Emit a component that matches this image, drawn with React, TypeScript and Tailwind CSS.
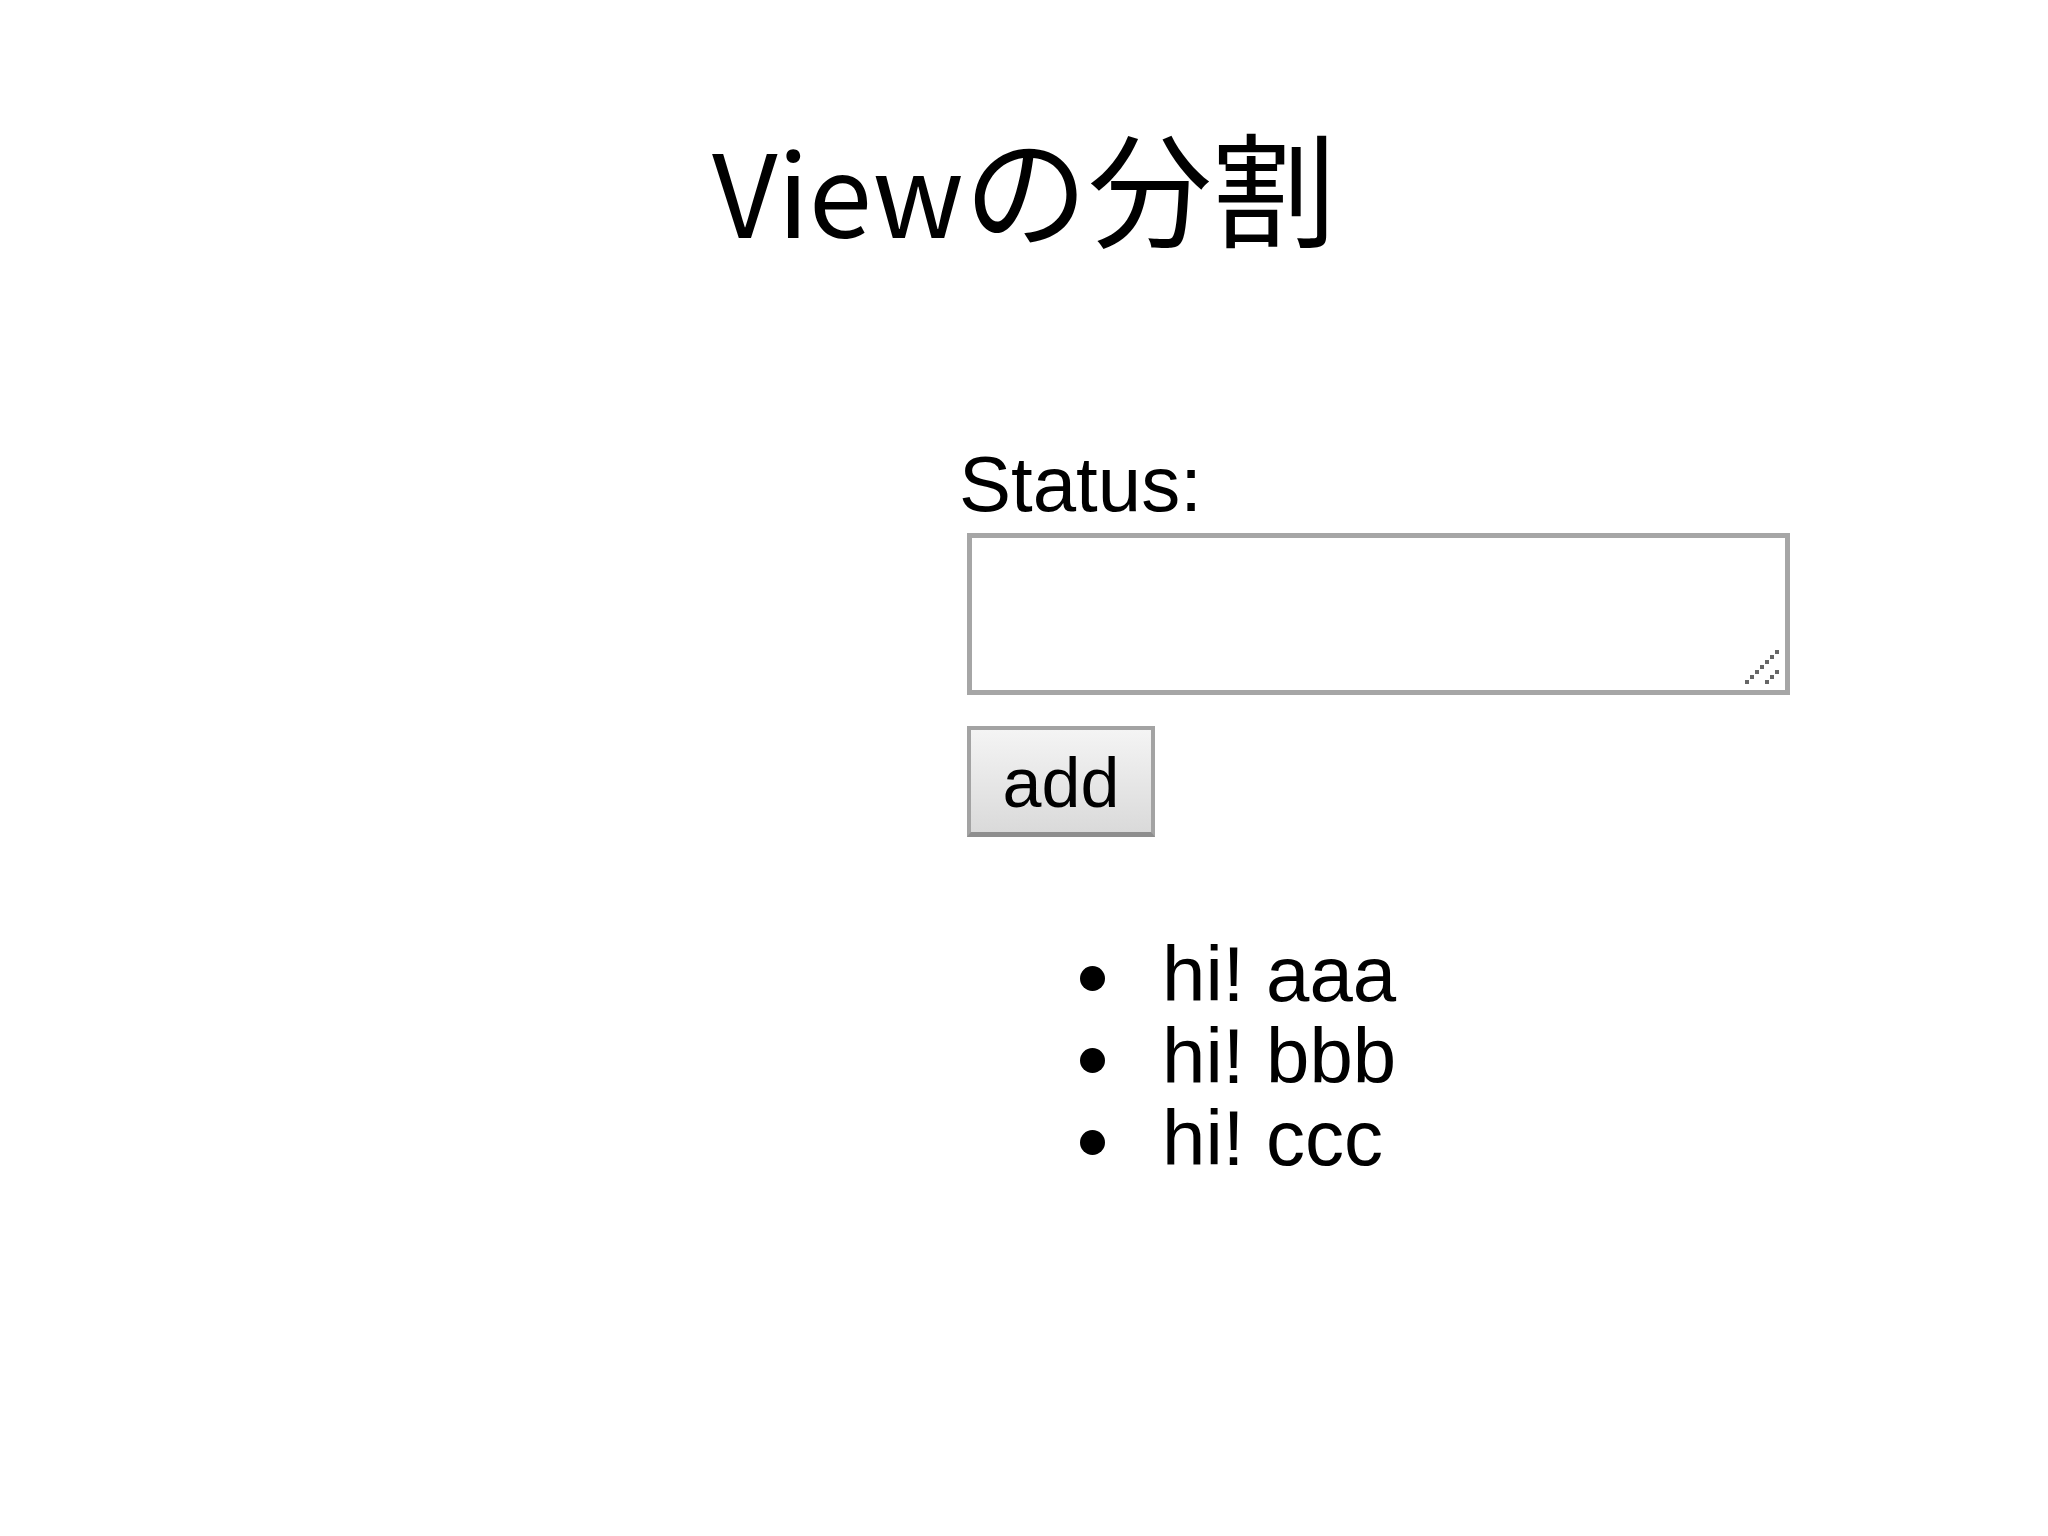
import React from "react";

const items = ["hi! aaa", "hi! bbb", "hi! ccc"];

function Grip() {
  const long = [0, 1, 2, 3, 4, 5, 6];
  const short = [0, 1, 2];
  return (
    <svg
      className="absolute right-[4px] bottom-[5px]"
      width="37"
      height="36"
      viewBox="0 0 37 36"
    >
      {long.map((k) => (
        <rect key={"l" + k} x={1 + 5 * k} y={31 - 5 * k} width="4" height="4" fill="#666666" />
      ))}
      {short.map((k) => (
        <rect key={"s" + k} x={21 + 5 * k} y={31 - 5 * k} width="4" height="4" fill="#666666" />
      ))}
    </svg>
  );
}

export default function App() {
  return (
    <div className="w-[2048px] h-[1536px] bg-white overflow-hidden text-black">
      <h1 className="pt-[122px] h-[252px] text-center text-[124px] leading-none font-normal font-['Noto_Sans_CJK_JP','Noto_Sans',sans-serif]">
        <span className="text-[114px]">View</span>
        <span>の分割</span>
      </h1>

      <div className="ml-[959px] mt-[193px] flex flex-col items-start font-['Liberation_Sans',Arial,sans-serif]">
        <label className="text-[78px] leading-none">Status:</label>

        <div className="relative ml-[8px] mt-[10px] w-[823px] h-[162px] border-[5px] border-[#a6a6a6] bg-white">
          <Grip />
        </div>

        <button
          type="button"
          className="ml-[8px] mt-[31px] w-[188px] h-[111px] border-[4px] border-b-[5px] border-[#a3a3a3] border-b-[#8e8e8e] bg-gradient-to-b from-[#f4f4f4] to-[#dadada] flex items-center justify-center pt-[4px] text-[70px] leading-none text-black"
        >
          add
        </button>

        <ul className="mt-[96px] ml-[121px] flex flex-col">
          {items.map((t) => (
            <li key={t} className="flex items-start h-[82px]">
              <span className="mt-[33px] w-[25px] h-[25px] rounded-full bg-black shrink-0" />
              <span className="ml-[57px] text-[78px] leading-[82px] whitespace-pre">{t}</span>
            </li>
          ))}
        </ul>
      </div>
    </div>
  );
}
